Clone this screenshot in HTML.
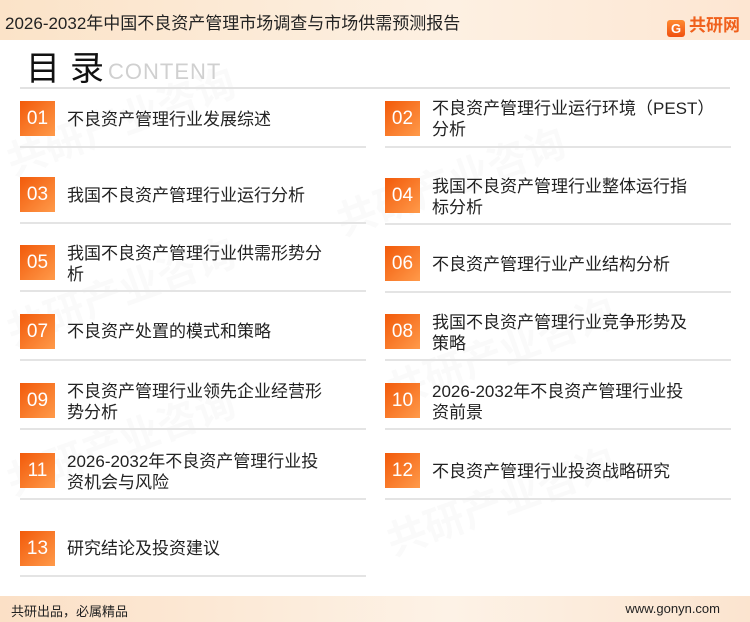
<!DOCTYPE html>
<html><head><meta charset="utf-8"><style>
*{margin:0;padding:0;box-sizing:border-box}
body{width:750px;height:622px;position:relative;overflow:hidden;background:#fff;font-family:"Liberation Sans","Noto Sans CJK SC",sans-serif;color:#222}
.hdr{position:absolute;left:0;top:0;width:750px;height:40px;background:linear-gradient(90deg,#fbe3c8,#fdf0e2 60%,#fde6d2)}
.hdr .t{position:absolute;left:5px;top:9px;font-size:17px;color:#222}
.logo{position:absolute;left:667px;top:11px;font-size:17px;font-weight:bold;color:#f0601c}
.logo b{display:inline-block;width:18px;height:17px;background:linear-gradient(#ff8a30,#f05010);border-radius:3px;vertical-align:-2px;margin-right:4px;color:#fff;font-size:13px;text-align:center;line-height:17px}
.ttl{position:absolute;left:26px;top:52px;font-size:34px;line-height:34px;color:#111;letter-spacing:10px}
.cont{position:absolute;left:108px;top:61px;font-size:22px;line-height:22px;color:#d0d0d0;letter-spacing:1px}
.hl{position:absolute;left:20px;top:87px;width:710px;height:2px;background:#e2e2e2}
.box{position:absolute;width:35px;height:35px;background:linear-gradient(135deg,#f25a0a,#ff9a4a);color:#fff;font-size:19px;text-align:center;line-height:35px}
.tx{position:absolute;width:264px;font-size:17px;line-height:21px;color:#222}
.ln{position:absolute;width:346px;height:2px;background:#e4e4e4}
.wm{position:absolute;font-size:40px;font-weight:bold;color:rgba(0,0,0,0.02);transform:rotate(-20deg);white-space:nowrap}
.ft{position:absolute;left:0;top:596px;width:750px;height:26px;background:linear-gradient(90deg,#fbe0c6,#fdf2e6 60%,#fbe4cf)}
.ft .l{position:absolute;left:11px;top:5px;font-size:13px}
.ft .r{position:absolute;right:30px;top:5px;font-size:13px}
</style></head><body>
<div class="wm" style="left:0;top:90px">共研产业咨询</div>
<div class="wm" style="left:330px;top:150px">共研产业咨询</div>
<div class="wm" style="left:0;top:260px">共研产业咨询</div>
<div class="wm" style="left:380px;top:320px">共研产业咨询</div>
<div class="wm" style="left:0;top:410px">共研产业咨询</div>
<div class="wm" style="left:380px;top:470px">共研产业咨询</div>
<div class="hdr"><div class="t">2026-2032年中国不良资产管理市场调查与市场供需预测报告</div><div class="logo"><b>G</b>共研网</div></div>
<div class="ttl">目录</div><div class="cont">CONTENT</div>
<div class="hl"></div>

<div class="box" style="left:20px;top:101px">01</div><div class="tx" style="left:67px;top:109px">不良资产管理行业发展综述</div>
<div class="box" style="left:385px;top:101px">02</div><div class="tx" style="left:432px;top:98px;width:300px">不良资产管理行业运行环境（PEST）<br>分析</div>
<div class="ln" style="left:20px;top:146px"></div><div class="ln" style="left:385px;top:146px"></div>

<div class="box" style="left:20px;top:177px">03</div><div class="tx" style="left:67px;top:185px">我国不良资产管理行业运行分析</div>
<div class="box" style="left:385px;top:178px">04</div><div class="tx" style="left:432px;top:176px">我国不良资产管理行业整体运行指标分析</div>
<div class="ln" style="left:20px;top:222px"></div><div class="ln" style="left:385px;top:223px"></div>

<div class="box" style="left:20px;top:245px">05</div><div class="tx" style="left:67px;top:243px">我国不良资产管理行业供需形势分析</div>
<div class="box" style="left:385px;top:246px">06</div><div class="tx" style="left:432px;top:254px">不良资产管理行业产业结构分析</div>
<div class="ln" style="left:20px;top:290px"></div><div class="ln" style="left:385px;top:291px"></div>

<div class="box" style="left:20px;top:314px">07</div><div class="tx" style="left:67px;top:321px">不良资产处置的模式和策略</div>
<div class="box" style="left:385px;top:314px">08</div><div class="tx" style="left:432px;top:312px">我国不良资产管理行业竞争形势及策略</div>
<div class="ln" style="left:20px;top:359px"></div><div class="ln" style="left:385px;top:359px"></div>

<div class="box" style="left:20px;top:383px">09</div><div class="tx" style="left:67px;top:381px">不良资产管理行业领先企业经营形势分析</div>
<div class="box" style="left:385px;top:383px">10</div><div class="tx" style="left:432px;top:381px">2026-2032年不良资产管理行业投资前景</div>
<div class="ln" style="left:20px;top:428px"></div><div class="ln" style="left:385px;top:428px"></div>

<div class="box" style="left:20px;top:453px">11</div><div class="tx" style="left:67px;top:451px">2026-2032年不良资产管理行业投资机会与风险</div>
<div class="box" style="left:385px;top:453px">12</div><div class="tx" style="left:432px;top:461px">不良资产管理行业投资战略研究</div>
<div class="ln" style="left:20px;top:498px"></div><div class="ln" style="left:385px;top:498px"></div>

<div class="box" style="left:20px;top:531px">13</div><div class="tx" style="left:67px;top:538px">研究结论及投资建议</div>
<div class="ln" style="left:20px;top:575px"></div>

<div class="ft"><div class="l">共研出品，必属精品</div><div class="r">www.gonyn.com</div></div>
</body></html>
